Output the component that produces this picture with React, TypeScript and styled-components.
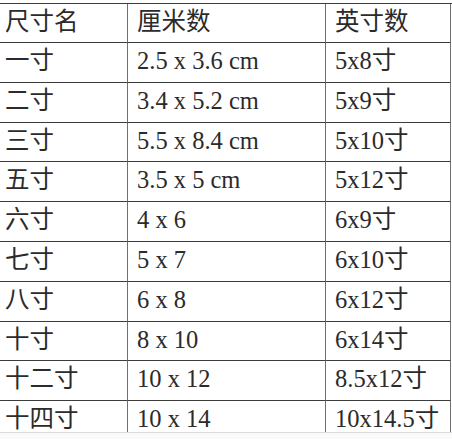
import styled, { createGlobalStyle } from "styled-components";

const GlobalStyle = createGlobalStyle`
  html, body {
    margin: 0;
    padding: 0;
    background: #fafafa;
  }
`;

const Page = styled.div`
  width: 452px;
  height: 439px;
  overflow: hidden;
  background: #fafafa;
`;

const Sheet = styled.div`
  background: #ffffff;
  padding-top: 3px;
  height: 429px;
  overflow: hidden;
  border-bottom: 1px solid #dcdcdc;
`;

const Table = styled.div`
  display: grid;
  grid-template-columns: 128px 198px 125px;
  border-top: 1px solid #3c3c3c;
`;

const Cell = styled.div<{ $first?: boolean; $header?: boolean }>`
  box-sizing: border-box;
  height: ${({ $header }) => ($header ? "39px" : "39.8px")};
  display: flex;
  align-items: center;
  padding-left: ${({ $first }) => ($first ? "5px" : "9px")};
  padding-bottom: 3px;
  border-bottom: 1px solid #3c3c3c;
  border-right: 1px solid #707070;
  font-family: "Liberation Serif", "Noto Sans CJK SC", serif;
  font-size: 24.5px;
  line-height: 1.05;
  color: #2b2b2b;
  white-space: nowrap;
  overflow: hidden;
`;

const header = ["尺寸名", "厘米数", "英寸数"];

const rows: [string, string, string][] = [
  ["一寸", "2.5 x 3.6 cm", "5x8寸"],
  ["二寸", "3.4 x 5.2 cm", "5x9寸"],
  ["三寸", "5.5 x 8.4 cm", "5x10寸"],
  ["五寸", "3.5 x 5 cm", "5x12寸"],
  ["六寸", "4 x 6", "6x9寸"],
  ["七寸", "5 x 7", "6x10寸"],
  ["八寸", "6 x 8", "6x12寸"],
  ["十寸", "8 x 10", "6x14寸"],
  ["十二寸", "10 x 12", "8.5x12寸"],
  ["十四寸", "10 x 14", "10x14.5寸"],
];

export default function App() {
  return (
    <Page>
      <GlobalStyle />
      <Sheet>
        <Table>
          {header.map((h, i) => (
            <Cell key={h} $header $first={i === 0}>
              {h}
            </Cell>
          ))}
          {rows.map((r) =>
            r.map((c, i) => (
              <Cell key={r[0] + i} $first={i === 0}>
                {c}
              </Cell>
            ))
          )}
        </Table>
      </Sheet>
    </Page>
  );
}
